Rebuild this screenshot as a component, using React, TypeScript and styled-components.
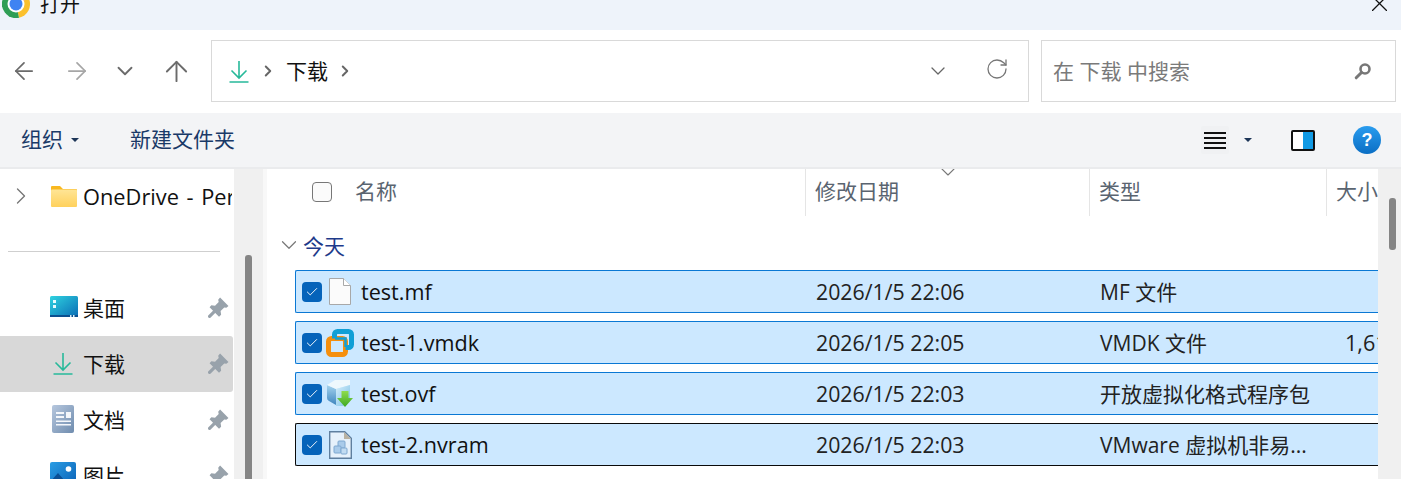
import React from 'react';
import styled, { createGlobalStyle } from 'styled-components';
import { ArrowLeft, ArrowRight, ArrowUp, ChevronDown, ChevronRight, RotateCw, Check } from 'lucide-react';

const GlobalStyle = createGlobalStyle`
  html, body {
    margin: 0;
    height: 100%;
    overflow: hidden;
    background: #fff;
  }
  body {
    font-family: "Open Sans", "Noto Sans CJK SC", sans-serif;
    color: #111;
  }
`;

const DownloadIcon = ({ size = 24 }: { size?: number }) => (
  <svg width={size} height={size} viewBox="0 0 24 24" fill="none" stroke="#27b99a" strokeWidth="1.6">
    <path d="M12 2v17M4.5 11.5 12 19l7.5-7.5M2.5 23h19" />
  </svg>
);

const PinIcon = () => (
  <svg width="21" height="21" viewBox="0 0 20 20" fill="#98a2ab">
    <path d="M11.500.500 19.500 8.500 17.500 10.300 15.500 9.900 12 13.400 12.500 17 10.500 18.800 1.500 9.800 3.200 7.800 6.700 8.300 10.200 4.800 9.700 2.600z" />
    <path d="M6.500 13.500 1.500 18.500" stroke="#98a2ab" strokeWidth="3" strokeLinecap="round" />
  </svg>
);

const ChromeLogo = () => (
  <svg width="28" height="28" viewBox="0 0 28 28">
    <path d="M14 14 1.900 7A14 14 0 0 1 26.900 8.500z" fill="#e8443a" />
    <path d="M14 14 26.900 8.500A14 14 0 0 1 17 27.700z" fill="#fbc02d" />
    <path d="M14 14 17 27.700A14 14 0 0 1 1.900 7z" fill="#2f9e55" />
    <circle cx="14" cy="14" r="8.500" fill="#fff" />
    <circle cx="14" cy="14" r="6.500" fill="#3f83f2" />
  </svg>
);

const FolderIcon = () => (
  <svg width="26" height="21" viewBox="0 0 26 21">
    <defs>
      <linearGradient id="folderFill" x1="0" y1="0" x2="0" y2="1">
        <stop offset="0" stopColor="#ffe596" />
        <stop offset="1" stopColor="#ffd15c" />
      </linearGradient>
    </defs>
    <path d="M1 0h8l3 3h13a1 1 0 0 1 1 1v3H0V1a1 1 0 0 1 1-1z" fill="#f9b81f" />
    <rect x="0" y="3.500" width="26" height="17.500" rx="1" fill="url(#folderFill)" />
  </svg>
);

const DesktopIcon = () => (
  <svg width="28" height="22" viewBox="0 0 28 22">
    <defs>
      <linearGradient id="desktopFill" x1="0" y1="0" x2="1" y2="1">
        <stop offset="0" stopColor="#2fd3e0" />
        <stop offset="1" stopColor="#0a6cb5" />
      </linearGradient>
    </defs>
    <rect width="28" height="21" rx="1.500" fill="url(#desktopFill)" />
    <rect x="0" y="19" width="28" height="2" fill="#0b4f8f" />
    <rect x="3" y="4" width="3" height="3" fill="#e6fbff" />
    <rect x="3" y="9" width="3" height="3" fill="#e6fbff" />
    <rect x="20" y="19" width="1.500" height="2" fill="#d7eef8" />
    <rect x="23" y="19" width="1.500" height="2" fill="#d7eef8" />
  </svg>
);

const DocsIcon = () => (
  <svg width="22" height="28" viewBox="0 0 22 28">
    <defs>
      <linearGradient id="docsFill" x1="0" y1="0" x2="1" y2="1">
        <stop offset="0" stopColor="#b6c7de" />
        <stop offset="1" stopColor="#6f8cae" />
      </linearGradient>
    </defs>
    <rect width="22" height="28" rx="2" fill="url(#docsFill)" />
    <path d="M4 7h8v2H4zM4 11h8v2H4zM14 7h5v6h-5zM4 15.500h15v1.500H4zM4 19h15v1.500H4z" fill="#f4f7fb" />
  </svg>
);

const PictureIcon = () => (
  <svg width="26" height="26" viewBox="0 0 26 26">
    <defs>
      <linearGradient id="pictureFill" x1="0" y1="0" x2="1" y2="1">
        <stop offset="0" stopColor="#2a9de4" />
        <stop offset="1" stopColor="#0a5fb4" />
      </linearGradient>
    </defs>
    <rect width="26" height="26" rx="2" fill="url(#pictureFill)" />
    <circle cx="18.500" cy="7" r="2.800" fill="#fff" />
    <path d="M0 20 8 11l7 8 3-2 8 6v1a2 2 0 0 1-2 2H2a2 2 0 0 1-2-2z" fill="#0b4f95" />
  </svg>
);

const BlankFileIcon = () => (
  <svg width="22" height="27" viewBox="0 0 22 27">
    <path d="M.5.500h14l7 7v19H.500z" fill="#fbfbfb" stroke="#a8a8a8" />
    <path d="M14.500.500v7h7" fill="#fff" stroke="#a8a8a8" />
  </svg>
);

const VmwareIcon = () => (
  <svg width="28" height="28" viewBox="0 0 28 28" fill="none">
    <rect x="2.500" y="9.500" width="17" height="16" rx="3" stroke="#f58f0e" strokeWidth="5" />
    <path d="M8.500 9.500V5.500a3 3 0 0 1 3-3h11a3 3 0 0 1 3 3v10a3 3 0 0 1-3 3h-3" stroke="#109fd6" strokeWidth="5" />
    <path d="M9 9.500h10.500v8.500" stroke="#109fd6" strokeWidth="2.500" />
  </svg>
);

const OvfIcon = () => (
  <svg width="26" height="27" viewBox="0 0 26 27">
    <defs>
      <linearGradient id="cubeLeft" x1="0" y1="0" x2="0" y2="1">
        <stop offset="0" stopColor="#a5d3ee" />
        <stop offset="1" stopColor="#3f86bf" />
      </linearGradient>
      <linearGradient id="cubeRight" x1="0" y1="0" x2="1" y2="1">
        <stop offset="0" stopColor="#d5eefa" />
        <stop offset="1" stopColor="#7cc0e6" />
      </linearGradient>
      <linearGradient id="arrowFill" x1="0" y1="0" x2="0" y2="1">
        <stop offset="0" stopColor="#8fdc4e" />
        <stop offset="1" stopColor="#3da823" />
      </linearGradient>
    </defs>
    <path d="M0 5 9 9v16l-7-4q-2-1-2-3z" fill="url(#cubeLeft)" />
    <path d="M0 5 8 0h15v5L9 9z" fill="#eef8fd" />
    <path d="M9 9 23 5v15l-7 6H9z" fill="url(#cubeRight)" />
    <path d="M14.500 11h7v7H26l-8 9-8-9h4.500z" fill="url(#arrowFill)" />
  </svg>
);

const NvramIcon = () => (
  <svg width="23" height="28" viewBox="0 0 23 28">
    <path d="M.7.700h15l6.600 6.600v20H.700z" fill="#e6f1fb" stroke="#5f7f9f" strokeWidth="1.400" />
    <path d="M15 1v7h7z" fill="#b9b2a2" />
    <rect x="9" y="10" width="7" height="7" rx="1" fill="#a9cbea" stroke="#7fa8d0" />
    <rect x="5" y="15" width="7" height="7" rx="1" fill="#a9cbea" stroke="#7fa8d0" />
    <rect x="12" y="17" width="6" height="6" rx="1" fill="#c2dcf2" stroke="#7fa8d0" />
  </svg>
);

const SearchIcon = () => (
  <svg width="18" height="18" viewBox="0 0 18 18" fill="none" stroke="#777">
    <circle cx="11" cy="7" r="4.500" strokeWidth="2.600" />
    <path d="M7.500 10.500 2.200 15.800" strokeWidth="3" strokeLinecap="round" />
  </svg>
);

const ListIcon = () => (
  <svg width="22" height="19" viewBox="0 0 22 19" stroke="#111" strokeWidth="2">
    <path d="M0 2h22M0 7h22M0 12h22M0 17h22" />
  </svg>
);

const PreviewIcon = () => (
  <svg width="24" height="21" viewBox="0 0 24 21">
    <rect x="1" y="1" width="22" height="19" rx="1" fill="#fff" stroke="#111" strokeWidth="2" />
    <rect x="12" y="2" width="10" height="17" fill="#129ae4" />
  </svg>
);

const Window = styled.div`
  width: 1401px;
  height: 479px;
  display: flex;
  flex-direction: column;
  overflow: hidden;
`;

const TitleBar = styled.div`
  height: 30px;
  flex: none;
  background: #eef3fa;
  display: flex;
  align-items: flex-end;
  padding: 0 14px 12px 2px;
  box-sizing: border-box;
`;

const TitleText = styled.span`
  margin-left: 10px;
  font-size: 20px;
  line-height: 26px;
  flex: 1;
`;

const CloseButton = styled.svg`
  width: 15px;
  height: 15px;
  margin-bottom: 7px;
  stroke: #111;
  stroke-width: 1.300;
  fill: none;
`;

const AddressRow = styled.div`
  height: 83px;
  flex: none;
  display: flex;
  align-items: flex-start;
  padding-top: 10px;
  box-sizing: border-box;
`;

const NavButton = styled.div<{ $width: number; $color?: string }>`
  width: ${(p) => p.$width}px;
  height: 62px;
  display: flex;
  align-items: center;
  justify-content: center;
  color: ${(p) => p.$color ?? '#6b6b6b'};
`;

const AddressBox = styled.div`
  width: 818px;
  height: 62px;
  margin-left: 3px;
  box-sizing: border-box;
  border: 1px solid #d9d9d9;
  display: flex;
  align-items: center;
  padding: 0 19px 0 15px;
`;

const Crumb = styled.span`
  font-size: 21px;
  color: #111;
  margin-left: 9px;
  padding-bottom: 2px;
`;

const CrumbArrow = styled(ChevronRight)`
  color: #666;
  margin-left: 8px;
`;

const Spacer = styled.div`
  flex: 1;
`;

const AddressChevron = styled(ChevronDown)`
  color: #666;
  margin-right: 35px;
`;

const RefreshIcon = styled(RotateCw)`
  color: #777;
  margin-bottom: 5px;
`;

const SearchBox = styled.div`
  width: 355px;
  height: 62px;
  margin-left: 12px;
  box-sizing: border-box;
  border: 1px solid #d9d9d9;
  display: flex;
  align-items: center;
  justify-content: space-between;
  padding: 0 23px 0 11px;
`;

const SearchHint = styled.span`
  font-size: 21px;
  color: #7a7a7a;
  padding-bottom: 2px;
`;

const CommandBar = styled.div`
  height: 54px;
  flex: none;
  background: #f3f4f6;
  border-bottom: 2px solid #eaebed;
  box-sizing: content-box;
  display: flex;
  align-items: center;
  padding: 0 20px 0 21px;
`;

const CommandLabel = styled.span<{ $offset?: number }>`
  font-size: 21px;
  color: #1a3a68;
  margin-left: ${(p) => p.$offset ?? 0}px;
  padding-bottom: 4px;
`;

const Caret = styled.span<{ $offset: number }>`
  width: 0;
  height: 0;
  border-left: 4px solid transparent;
  border-right: 4px solid transparent;
  border-top: 4px solid #1d3557;
  margin-left: ${(p) => p.$offset}px;
`;

const ViewButton = styled.div`
  width: 28px;
  height: 28px;
  background: #f0f1f3;
  border-radius: 2px;
  display: flex;
  align-items: center;
  justify-content: center;
`;

const PreviewSlot = styled.div`
  margin-left: 39px;
  display: flex;
`;

const HelpButton = styled.div`
  width: 28px;
  height: 28px;
  margin-left: 38px;
  border-radius: 50%;
  background: linear-gradient(180deg, #2a9cee, #0a6ec4);
  color: #fff;
  font-family: "Liberation Sans", sans-serif;
  font-weight: 700;
  font-size: 18px;
  display: flex;
  align-items: center;
  justify-content: center;
`;

const Body = styled.div`
  flex: 1;
  min-height: 0;
  display: flex;
`;

const Sidebar = styled.nav`
  width: 234px;
  flex: none;
  overflow: hidden;
`;

const OneDriveRow = styled.div`
  height: 54px;
  width: 232px;
  display: flex;
  align-items: center;
  padding-left: 7px;
  box-sizing: border-box;
  font-size: 21.8px;
  word-spacing: 2px;
  white-space: nowrap;
  overflow: hidden;

  svg {
    flex: none;
  }
`;

const TreeArrow = styled(ChevronRight)`
  color: #777;
  margin-right: 16px;
`;

const OneDriveName = styled.span`
  margin-left: 6px;
`;

const Divider = styled.hr`
  margin: 28px 14px 28px 8px;
  border: 0;
  border-top: 1px solid #cfcfcf;
`;

const NavItem = styled.div<{ $selected?: boolean }>`
  height: 56px;
  width: 233px;
  box-sizing: border-box;
  display: flex;
  align-items: center;
  padding: 0 4px 2px 0;
  font-size: 21px;
  background: ${(p) => (p.$selected ? '#d8d8d8' : 'transparent')};
  border-radius: 0 3px 3px 0;
`;

const NavIconSlot = styled.div<{ $inset: number }>`
  width: 83px;
  padding-right: ${(p) => 5 + p.$inset}px;
  box-sizing: border-box;
  display: flex;
  justify-content: flex-end;
  flex: none;
`;

const NavLabel = styled.span`
  flex: 1;
`;

const SideScrollTrack = styled.div`
  width: 29px;
  flex: none;
  background: #f0f0f0;
  padding: 86px 0 0 11px;
  box-sizing: border-box;
`;

const SideScrollThumb = styled.div`
  width: 7px;
  height: 240px;
  background: #858585;
  border-radius: 3px;
`;

const Sash = styled.div`
  width: 4px;
  flex: none;
  background: #f8f8f8;
`;

const FilePane = styled.div`
  width: 1111px;
  flex: none;
  overflow: hidden;
`;

const HeaderRow = styled.div`
  display: grid;
  grid-template-columns: 539px 284px 237px 100px;
  height: 47px;
  width: 1160px;
`;

const HeaderCell = styled.div<{ $first?: boolean }>`
  position: relative;
  display: flex;
  align-items: center;
  font-size: 21px;
  color: #5a6470;
  box-sizing: border-box;
  padding-left: ${(p) => (p.$first ? 45 : 9)}px;
  padding-bottom: 5px;
  border-right: 1px solid #e5e5e5;
`;

const SortMark = styled(ChevronDown)`
  position: absolute;
  top: -9px;
  left: 130px;
  color: #777;
`;

const HeaderCheck = styled.span`
  width: 20px;
  height: 20px;
  box-sizing: border-box;
  border: 1px solid #777;
  border-radius: 4px;
  background: #fbfbfb;
  margin: 4px 23px 0 0;
`;

const GroupTitle = styled.div`
  height: 54px;
  padding: 4px 0 0 9px;
  box-sizing: border-box;
  display: flex;
  align-items: center;
  gap: 1px;
  font-size: 21px;
  color: #1e3a8a;
`;

const GroupChevron = styled(ChevronDown)`
  color: #777;
`;

const FileList = styled.div`
  display: flex;
  flex-direction: column;
  gap: 8px;
  padding-left: 28px;
`;

const FileRow = styled.div<{ $focused?: boolean }>`
  height: 43px;
  width: 1083px;
  box-sizing: border-box;
  display: grid;
  grid-template-columns: 520px 284px 245px 1fr;
  align-items: center;
  background: #cce8ff;
  border: 1px solid ${(p) => (p.$focused ? '#0a0a0a' : '#0a78d4')};
  border-right: 0;
  border-radius: 2px 0 0 2px;
  font-size: 21.6px;
  white-space: nowrap;
  overflow: hidden;
`;

const NameCell = styled.div`
  display: flex;
  align-items: center;
  padding-left: 6px;
`;

const RowCheck = styled.span`
  width: 20px;
  height: 20px;
  border-radius: 4px;
  background: #0563ba;
  color: #fff;
  display: flex;
  align-items: center;
  justify-content: center;
  flex: none;
`;

const RowIcon = styled.div`
  width: 39px;
  padding-right: 3px;
  box-sizing: border-box;
  display: flex;
  justify-content: center;
  flex: none;
`;

const DateCell = styled.div`
  color: #222;
  font-size: 21.3px;
`;

const TypeCell = styled.div`
  color: #222;
  font-size: 21px;
  padding-bottom: 2px;
`;

const SizeCell = styled.div`
  color: #222;
  overflow: hidden;
`;

const PageScrollTrack = styled.div`
  flex: 1;
  background: #f0f0f0;
  padding: 29px 0 0 11px;
  box-sizing: border-box;
`;

const PageScrollThumb = styled.div`
  width: 7px;
  height: 52px;
  background: #858585;
  border-radius: 3px;
`;

const files = [
  { name: 'test.mf', date: '2026/1/5 22:06', type: 'MF 文件', icon: <BlankFileIcon />, size: '' },
  { name: 'test-1.vmdk', date: '2026/1/5 22:05', type: 'VMDK 文件', icon: <VmwareIcon />, size: '1,611,200 KB' },
  { name: 'test.ovf', date: '2026/1/5 22:03', type: '开放虚拟化格式程序包', icon: <OvfIcon />, size: '' },
  { name: 'test-2.nvram', date: '2026/1/5 22:03', type: 'VMware 虚拟机非易...', icon: <NvramIcon />, size: '', focused: true },
];

const quickAccess = [
  { label: '桌面', icon: <DesktopIcon />, inset: 0 },
  { label: '下载', icon: <DownloadIcon size={24} />, inset: 3, selected: true },
  { label: '文档', icon: <DocsIcon />, inset: 4 },
  { label: '图片', icon: <PictureIcon />, inset: 2 },
];

export default function App() {
  return (
    <Window>
      <GlobalStyle />
      <TitleBar>
        <ChromeLogo />
        <TitleText>打开</TitleText>
        <CloseButton viewBox="0 0 15 15">
          <path d="M0 0 15 15M15 0 0 15" />
        </CloseButton>
      </TitleBar>

      <AddressRow>
        <NavButton $width={48}>
          <ArrowLeft size={28} strokeWidth={1.5} />
        </NavButton>
        <NavButton $width={58} $color="#a6a6a6">
          <ArrowRight size={28} strokeWidth={1.5} />
        </NavButton>
        <NavButton $width={38}>
          <ChevronDown size={26} strokeWidth={1.7} />
        </NavButton>
        <NavButton $width={64}>
          <ArrowUp size={33} strokeWidth={1.4} />
        </NavButton>
        <AddressBox>
          <DownloadIcon size={24} />
          <CrumbArrow size={18} strokeWidth={2.6} />
          <Crumb>下载</Crumb>
          <CrumbArrow size={18} strokeWidth={2.6} />
          <Spacer />
          <AddressChevron size={24} strokeWidth={1.3} />
          <RefreshIcon size={24} strokeWidth={1.3} />
        </AddressBox>
        <SearchBox>
          <SearchHint>在 下载 中搜索</SearchHint>
          <SearchIcon />
        </SearchBox>
      </AddressRow>

      <CommandBar>
        <CommandLabel>组织</CommandLabel>
        <Caret $offset={8} />
        <CommandLabel $offset={51}>新建文件夹</CommandLabel>
        <Spacer />
        <ViewButton>
          <ListIcon />
        </ViewButton>
        <Caret $offset={15} />
        <PreviewSlot>
          <PreviewIcon />
        </PreviewSlot>
        <HelpButton>?</HelpButton>
      </CommandBar>

      <Body>
        <Sidebar>
          <OneDriveRow>
            <TreeArrow size={28} strokeWidth={1.2} />
            <FolderIcon />
            <OneDriveName>OneDrive - Personal</OneDriveName>
          </OneDriveRow>
          <Divider />
          {quickAccess.map((item) => (
            <NavItem key={item.label} $selected={item.selected}>
              <NavIconSlot $inset={item.inset}>{item.icon}</NavIconSlot>
              <NavLabel>{item.label}</NavLabel>
              <PinIcon />
            </NavItem>
          ))}
        </Sidebar>
        <SideScrollTrack>
          <SideScrollThumb />
        </SideScrollTrack>
        <Sash />

        <FilePane>
          <HeaderRow>
            <HeaderCell $first>
              <HeaderCheck />
              名称
            </HeaderCell>
            <HeaderCell>
              修改日期
              <SortMark size={24} strokeWidth={1.1} />
            </HeaderCell>
            <HeaderCell>类型</HeaderCell>
            <HeaderCell>大小</HeaderCell>
          </HeaderRow>
          <GroupTitle>
            <GroupChevron size={26} strokeWidth={1.1} />
            今天
          </GroupTitle>
          <FileList>
            {files.map((file) => (
              <FileRow key={file.name} $focused={file.focused}>
                <NameCell>
                  <RowCheck>
                    <Check size={14} strokeWidth={1.6} />
                  </RowCheck>
                  <RowIcon>{file.icon}</RowIcon>
                  {file.name}
                </NameCell>
                <DateCell>{file.date}</DateCell>
                <TypeCell>{file.type}</TypeCell>
                <SizeCell>{file.size}</SizeCell>
              </FileRow>
            ))}
          </FileList>
        </FilePane>
        <PageScrollTrack>
          <PageScrollThumb />
        </PageScrollTrack>
      </Body>
    </Window>
  );
}
